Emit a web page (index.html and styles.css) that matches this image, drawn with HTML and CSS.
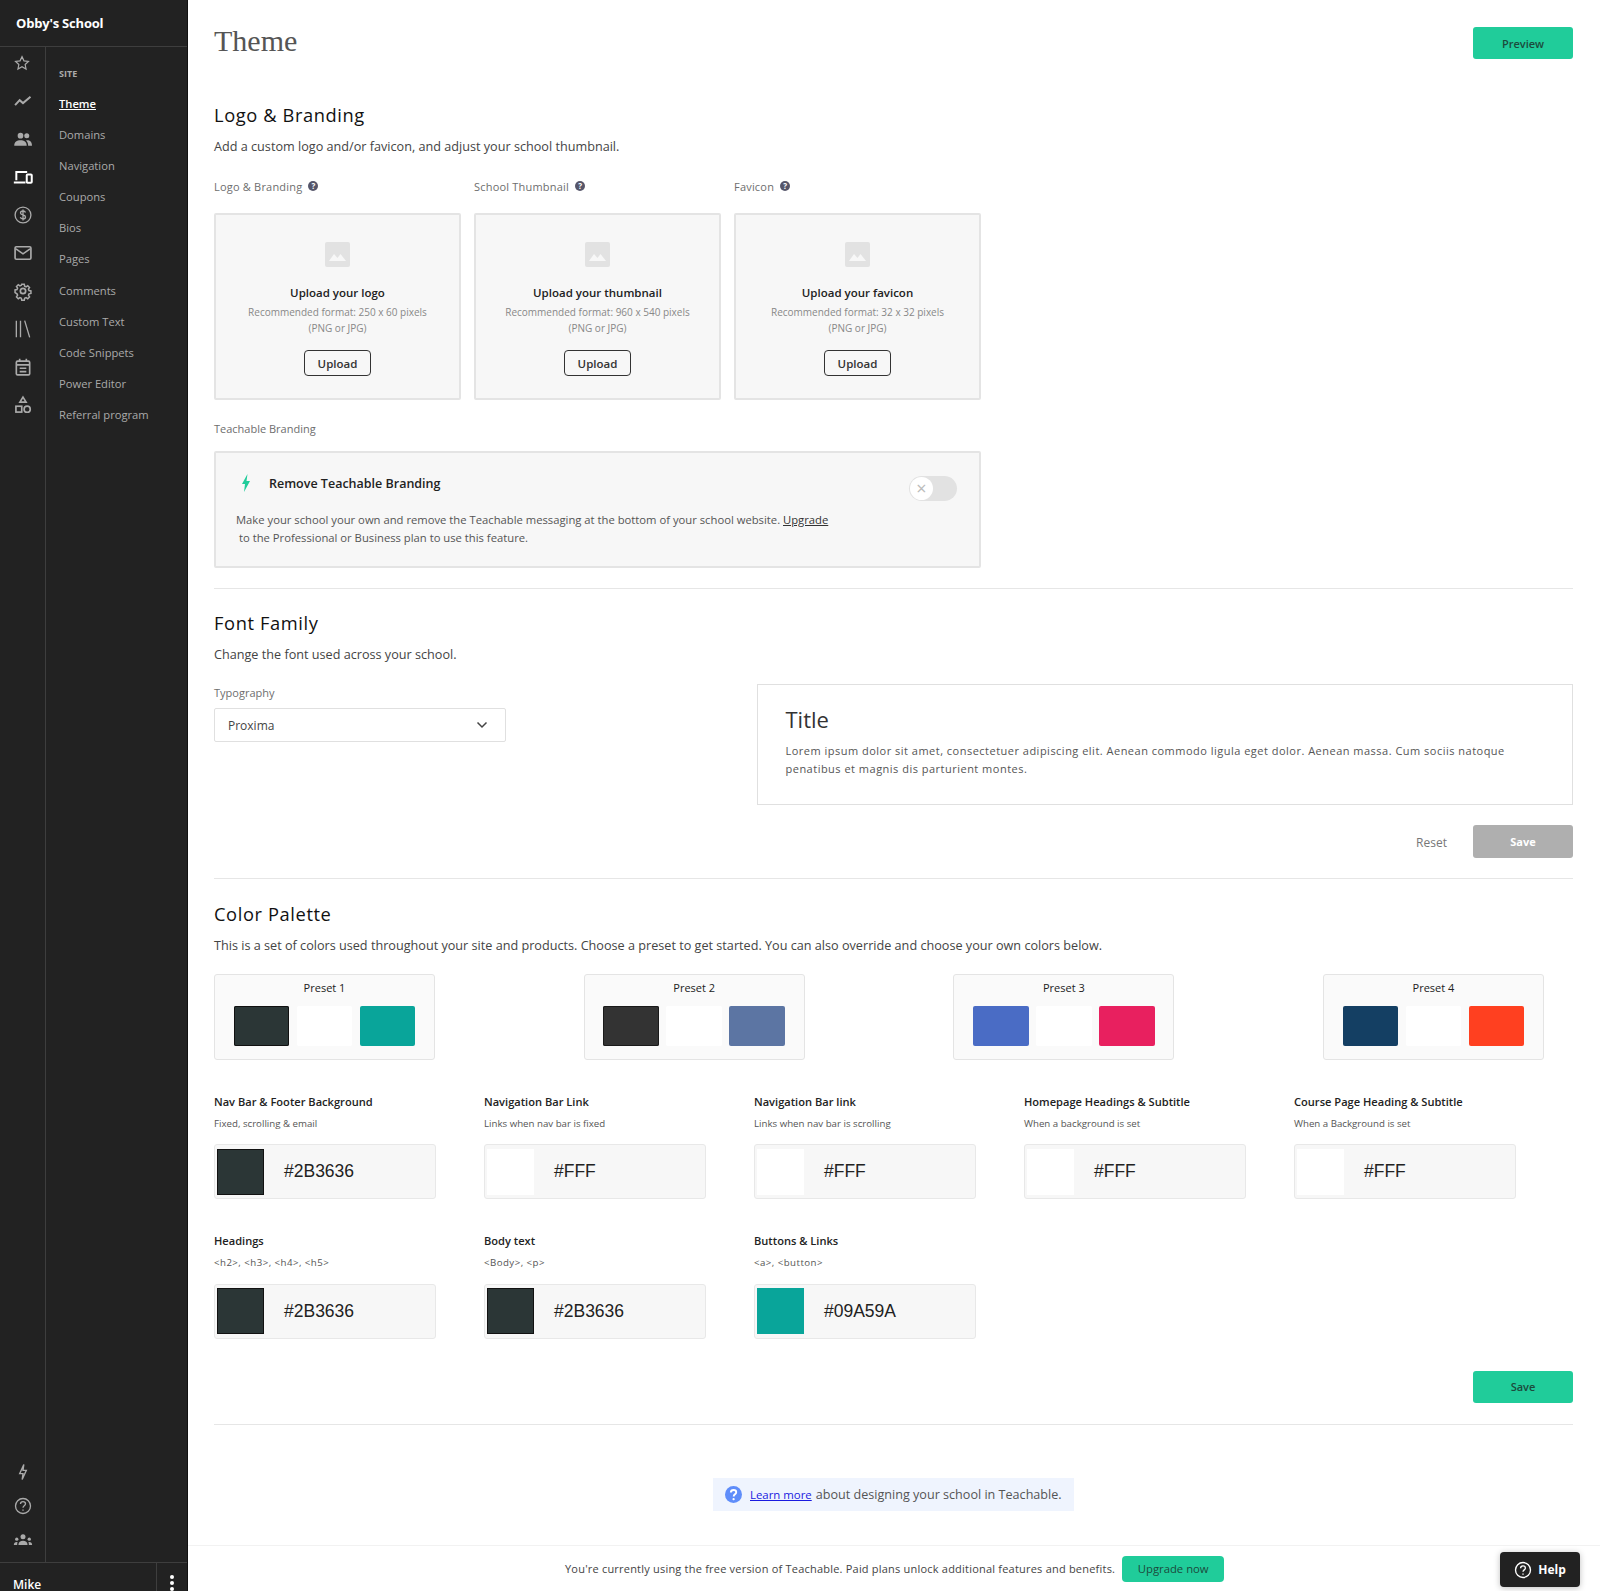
FILE: index.html
```html
<!DOCTYPE html>
<html lang="en">
<head>
<meta charset="utf-8">
<title>Theme</title>
<link rel="stylesheet" href="styles.css">
</head>
<body>
<div class="app">
  <aside class="sidebar">
    <div class="brand">Obby's School</div>
    <div class="side-body">
      <div class="rail">
        <div class="rail-top">
          <svg class="ri ri-star" viewBox="0 0 24 24"><path d="M12 3.500l2.600 5.600 6 .7-4.400 4.200 1.200 6L12 17l-5.400 3 1.200-6L3.400 9.800l6-.7z"/></svg>
          <svg class="ri" viewBox="0 0 24 24"><path d="M2.500 17l5.500-6 4 3.500 9-7.500" stroke-width="2.400"/></svg>
          <svg class="ri filled" viewBox="0 0 24 24"><circle cx="9" cy="8" r="3.400"/><circle cx="16.500" cy="8" r="3"/><path d="M1.500 20c0-4.500 3.200-6.500 7.500-6.500s7.500 2 7.500 6.500zM17 13.500c3.500 0 5.800 2 5.800 6.500h-4.600c0-2.500-.8-4.800-2.700-6.300z"/></svg>
          <svg class="ri active" viewBox="0 0 24 24"><path d="M4 16V6h13M1 18.500h14" stroke-width="2.400"/><rect x="16.500" y="9" width="6" height="10" rx="1" stroke-width="2.400"/></svg>
          <svg class="ri" viewBox="0 0 24 24"><circle cx="12" cy="12" r="9.500"/><path d="M15 9c-.5-1.300-1.600-1.800-3-1.800-1.800 0-3 .8-3 2.300 0 3.200 6 1.600 6 4.900 0 1.500-1.300 2.300-3 2.300-1.500 0-2.700-.6-3.200-2M12 5.500v13"/></svg>
          <svg class="ri" viewBox="0 0 24 24"><rect x="2.500" y="4.500" width="19" height="15" rx="1.500" stroke-width="2"/><path d="M3.500 7l8.500 6 8.500-6" stroke-width="2"/></svg>
          <svg class="ri" viewBox="0 0 24 24"><circle cx="12" cy="12" r="3.200" stroke-width="2"/><path d="M10.300 3h3.400l.5 2.600 1.900.8 2.200-1.500 2.400 2.400-1.500 2.200.8 1.900 2.600.5v3.400l-2.600.5-.8 1.900 1.500 2.200-2.400 2.400-2.200-1.500-1.900.8-.5 2.600h-3.400l-.5-2.600-1.900-.8-2.200 1.500-2.400-2.400 1.500-2.200-.8-1.900L1.400 14v-3.400l2.600-.5.8-1.900-1.500-2.200 2.400-2.400 2.200 1.500 1.900-.8z" transform="translate(12 12) scale(.9) translate(-12 -12)" stroke-width="2"/></svg>
          <svg class="ri" viewBox="0 0 24 24"><path d="M4 2v20M9 2v20M14 2l6 20"/></svg>
          <svg class="ri" viewBox="0 0 24 24"><rect x="4" y="5" width="16" height="16.500" rx="1.500" stroke-width="2"/><path d="M8 2v4M16 2v4M4 9.500h16M8 13.500h8M8 17.500h8" stroke-width="2"/></svg>
          <svg class="ri" viewBox="0 0 24 24"><path d="M12 2.500l3.700 6H8.300z" stroke-width="2"/><rect x="3.500" y="13.500" width="7" height="7" stroke-width="2"/><circle cx="17" cy="17" r="3.700" stroke-width="2"/></svg>
        </div>
        <div class="rail-bottom">
          <svg class="ri" viewBox="0 0 24 24"><path d="M13 3l-5 11h4l-1 7 5-11h-4z"/></svg>
          <svg class="ri" viewBox="0 0 24 24"><circle cx="12" cy="12" r="9"/><path d="M9 9.500c0-1.800 1.400-2.800 3-2.800s3 1 3 2.600c0 2.400-3 2.400-3 4.700M12 16.200v1.600"/></svg>
          <svg class="ri filled" viewBox="0 0 24 24"><circle cx="12" cy="8" r="3"/><circle cx="4.500" cy="11" r="2"/><circle cx="19.500" cy="11" r="2"/><path d="M6.500 18c0-3.500 2.500-5 5.500-5s5.500 1.500 5.500 5zM1 18c0-2 1.300-3.500 3.500-3.500l1 .3C5 15.800 5 17 5 18zM23 18c0-2-1.300-3.500-3.500-3.500l-1 .3c.5 1 .5 2.200.5 3.200z"/></svg>
        </div>
      </div>
      <nav class="side-nav">
        <div class="nav-head">SITE</div>
        <a class="nav-link current">Theme</a>
        <a class="nav-link">Domains</a>
        <a class="nav-link">Navigation</a>
        <a class="nav-link">Coupons</a>
        <a class="nav-link">Bios</a>
        <a class="nav-link">Pages</a>
        <a class="nav-link">Comments</a>
        <a class="nav-link">Custom Text</a>
        <a class="nav-link">Code Snippets</a>
        <a class="nav-link">Power Editor</a>
        <a class="nav-link">Referral program</a>
      </nav>
    </div>
    <div class="side-foot">
      <div class="user">Mike</div>
      <div class="dots"><i></i><i></i><i></i></div>
    </div>
  </aside>

  <div class="column">
    <main class="main">
      <header class="page-head">
        <h1 class="page-title">Theme</h1>
        <button class="btn btn-green">Preview</button>
      </header>

      <section class="sec sec-logo">
        <h2 class="sec-title">Logo &amp; Branding</h2>
        <p class="sec-desc">Add a custom logo and/or favicon, and adjust your school thumbnail.</p>
        <div class="uploads">
          <div class="upload-col">
            <div class="lbl lbl-up">Logo &amp; Branding <span class="qm">?</span></div>
            <div class="upload">
              <svg class="ph" viewBox="0 0 25 25"><rect width="25" height="25" rx="2" fill="#e2e2e2"/><path d="M4 19l5-7 3.500 4 3-4 5.500 7z" fill="#f7f7f7"/></svg>
              <div class="up-title">Upload your logo</div>
              <div class="up-sub">Recommended format: 250 x 60 pixels<br>(PNG or JPG)</div>
              <button class="btn-out">Upload</button>
            </div>
          </div>
          <div class="upload-col">
            <div class="lbl lbl-up">School Thumbnail <span class="qm">?</span></div>
            <div class="upload">
              <svg class="ph" viewBox="0 0 25 25"><rect width="25" height="25" rx="2" fill="#e2e2e2"/><path d="M4 19l5-7 3.500 4 3-4 5.500 7z" fill="#f7f7f7"/></svg>
              <div class="up-title">Upload your thumbnail</div>
              <div class="up-sub">Recommended format: 960 x 540 pixels<br>(PNG or JPG)</div>
              <button class="btn-out">Upload</button>
            </div>
          </div>
          <div class="upload-col">
            <div class="lbl lbl-up">Favicon <span class="qm">?</span></div>
            <div class="upload">
              <svg class="ph" viewBox="0 0 25 25"><rect width="25" height="25" rx="2" fill="#e2e2e2"/><path d="M4 19l5-7 3.500 4 3-4 5.500 7z" fill="#f7f7f7"/></svg>
              <div class="up-title">Upload your favicon</div>
              <div class="up-sub">Recommended format: 32 x 32 pixels<br>(PNG or JPG)</div>
              <button class="btn-out">Upload</button>
            </div>
          </div>
        </div>
        <div class="lbl lbl-brand">Teachable Branding</div>
        <div class="brand-box">
          <div class="brand-row">
            <svg class="bolt" viewBox="0 0 10 18"><path d="M6.500 0L1 10h3l-1 8 6-11H5.500z" fill="#20cc9a"/></svg>
            <span class="brand-title">Remove Teachable Branding</span>
            <span class="toggle"><span class="knob">×</span></span>
          </div>
          <p class="brand-text">Make your school your own and remove the Teachable messaging at the bottom of your school website. <a class="dark-link">Upgrade</a><br><span class="indent">to the Professional or Business plan to use this feature.</span></p>
        </div>
      </section>

      <section class="sec sec-font">
        <h2 class="sec-title">Font Family</h2>
        <p class="sec-desc">Change the font used across your school.</p>
        <div class="font-row">
          <div class="font-pick">
            <div class="lbl">Typography</div>
            <div class="select">Proxima
              <svg class="chev" viewBox="0 0 12 8"><path d="M1.500 1.500L6 6l4.500-4.500"/></svg>
            </div>
          </div>
          <div class="font-preview">
            <div class="fp-title">Title</div>
            <p class="fp-text">Lorem ipsum dolor sit amet, consectetuer adipiscing elit. Aenean commodo ligula eget dolor. Aenean massa. Cum sociis natoque penatibus et magnis dis parturient montes.</p>
          </div>
        </div>
        <div class="actions">
          <span class="reset">Reset</span>
          <button class="btn btn-grey">Save</button>
        </div>
      </section>

      <section class="sec sec-color">
        <h2 class="sec-title">Color Palette</h2>
        <p class="sec-desc">This is a set of colors used throughout your site and products. Choose a preset to get started. You can also override and choose your own colors below.</p>
        <div class="presets">
          <div class="preset"><div class="preset-name">Preset 1</div><div class="chips"><i class="chip c-dark"></i><i class="chip c-white"></i><i class="chip c-teal"></i></div></div>
          <div class="preset"><div class="preset-name">Preset 2</div><div class="chips"><i class="chip c-char"></i><i class="chip c-white"></i><i class="chip c-slate"></i></div></div>
          <div class="preset"><div class="preset-name">Preset 3</div><div class="chips"><i class="chip c-blue"></i><i class="chip c-white"></i><i class="chip c-pink"></i></div></div>
          <div class="preset"><div class="preset-name">Preset 4</div><div class="chips"><i class="chip c-navy"></i><i class="chip c-white"></i><i class="chip c-orange"></i></div></div>
        </div>
        <div class="fields">
          <div class="field"><div class="f-name">Nav Bar &amp; Footer Background</div><div class="f-sub">Fixed, scrolling &amp; email</div><div class="f-box"><i class="f-sw c-dark"></i><span class="f-val">#2B3636</span></div></div>
          <div class="field"><div class="f-name">Navigation Bar Link</div><div class="f-sub">Links when nav bar is fixed</div><div class="f-box"><i class="f-sw c-white"></i><span class="f-val">#FFF</span></div></div>
          <div class="field"><div class="f-name">Navigation Bar link</div><div class="f-sub">Links when nav bar is scrolling</div><div class="f-box"><i class="f-sw c-white"></i><span class="f-val">#FFF</span></div></div>
          <div class="field"><div class="f-name">Homepage Headings &amp; Subtitle</div><div class="f-sub">When a background is set</div><div class="f-box"><i class="f-sw c-white"></i><span class="f-val">#FFF</span></div></div>
          <div class="field"><div class="f-name">Course Page Heading &amp; Subtitle</div><div class="f-sub">When a Background is set</div><div class="f-box"><i class="f-sw c-white"></i><span class="f-val">#FFF</span></div></div>
          <div class="field"><div class="f-name">Headings</div><div class="f-sub f-code">&lt;h2&gt;, &lt;h3&gt;, &lt;h4&gt;, &lt;h5&gt;</div><div class="f-box"><i class="f-sw c-dark"></i><span class="f-val">#2B3636</span></div></div>
          <div class="field"><div class="f-name">Body text</div><div class="f-sub f-code">&lt;Body&gt;, &lt;p&gt;</div><div class="f-box"><i class="f-sw c-dark"></i><span class="f-val">#2B3636</span></div></div>
          <div class="field"><div class="f-name">Buttons &amp; Links</div><div class="f-sub f-code">&lt;a&gt;, &lt;button&gt;</div><div class="f-box"><i class="f-sw c-teal"></i><span class="f-val">#09A59A</span></div></div>
        </div>
        <div class="actions actions-color">
          <button class="btn btn-green">Save</button>
        </div>
      </section>

      <div class="learn-wrap">
        <div class="learn">
          <svg class="learn-q" viewBox="0 0 18 18"><circle cx="9" cy="9" r="9" fill="#5f8dfa"/><path d="M6.200 7c0-1.700 1.300-2.700 2.900-2.700s2.800 1 2.800 2.400c0 2.100-2.700 2.100-2.700 4.300" fill="none" stroke="#fff" stroke-width="2"/><circle cx="9.100" cy="14" r="1.200" fill="#fff"/></svg>
          <a class="learn-link">Learn more</a> <span>about designing your school in Teachable.</span>
        </div>
      </div>
    </main>

    <footer class="promo">
      <span class="promo-text">You're currently using the free version of Teachable. Paid plans unlock additional features and benefits.</span>
      <button class="btn-up">Upgrade now</button>
      <button class="help">
        <svg class="help-i" viewBox="0 0 24 24"><circle cx="12" cy="12" r="10"/><path d="M8.800 9.500c0-2 1.500-3 3.200-3s3.200 1 3.200 2.800c0 2.500-3.200 2.500-3.200 5M12 16.500v1.800"/></svg>
        Help
      </button>
    </footer>
  </div>
</div>
</body>
</html>
```
FILE: styles.css
```css
* { box-sizing: border-box; }
html, body { margin: 0; padding: 0; height: 100%; }
body {
  font-family: "Open Sans", "Noto Sans", sans-serif;
  color: #222;
  background: #fff;
  overflow: hidden;
}
.app { display: flex; height: 1591px; }
button { font-family: inherit; cursor: pointer; }

/* Sidebar */
.sidebar {
  width: 188px;
  flex: none;
  background: #222;
  border-right: 1px solid #111;
  display: flex;
  flex-direction: column;
}
.brand {
  height: 47px;
  padding: 14px 0 0 16px;
  font-size: 13px;
  font-weight: 700;
  color: #fff;
  letter-spacing: -.2px;
  line-height: 18px;
  border-bottom: 1px solid #3e3e3e;
}
.side-body { flex: 1; display: flex; min-height: 0; }
.rail {
  width: 46px;
  border-right: 1px solid #3e3e3e;
  display: flex;
  flex-direction: column;
  justify-content: space-between;
  align-items: center;
  padding: 6px 0 12px;
}
.rail-top { display: flex; flex-direction: column; gap: 18px; }
.rail-bottom { display: flex; flex-direction: column; gap: 14px; }
.ri {
  display: block;
  width: 20px;
  height: 20px;
  fill: none;
  stroke: #aaa;
  stroke-width: 1.600;
}
.ri-star { transform: translateX(-1px) scale(.9); }
.ri.active { stroke: #fff; }
.ri.filled { fill: #aaa; stroke: none; }
.side-nav { padding: 19px 0 0 13px; }
.nav-head {
  font-size: 9px;
  font-weight: 700;
  color: #aaa;
  line-height: 16px;
  margin-bottom: 14px;
}
.nav-link {
  display: block;
  font-size: 11.200px;
  line-height: 16px;
  color: #aaa;
  margin-bottom: 15.100px;
}
.nav-link.current { color: #fff; font-weight: 600; text-decoration: underline; }
.side-foot {
  height: 29px;
  flex: none;
  border-top: 1px solid #3e3e3e;
  display: flex;
  overflow: hidden;
}
.user {
  width: 157px;
  padding: 15px 0 0 13px;
  font-size: 12px;
  font-weight: 600;
  line-height: 13px;
  color: #fff;
  border-right: 1px solid #3e3e3e;
}
.dots { flex: 1; display: flex; flex-direction: column; align-items: center; gap: 2px; padding-top: 12px; }
.dots i { width: 4px; height: 4px; border-radius: 50%; background: #fff; flex: none; }

/* Main column */
.column { flex: 1; min-width: 0; display: flex; flex-direction: column; }
.main { flex: 1; min-height: 0; padding: 0 27px 0 26px; overflow: hidden; }
.page-head { display: flex; justify-content: space-between; align-items: flex-start; padding-top: 27px; height: 98px; }
.page-title {
  margin: -3px 0 0;
  font-family: "Liberation Serif", serif;
  font-weight: 400;
  font-size: 30px;
  line-height: 34px;
  color: #555;
}
.btn {
  width: 100px;
  height: 32px;
  border: 0;
  border-radius: 3px;
  font-size: 11px;
  font-weight: 600;
}
.btn-green { background: #20cc9a; color: #1c4a3c; }
.btn-grey { background: #afafaf; color: #fff; font-weight: 700; height: 33px; }

.sec-title {
  margin: -1px 0 0;
  font-size: 18.300px;
  font-weight: 500;
  line-height: 24px;
  color: #111;
  letter-spacing: .6px;
}
.sec-desc {
  margin: 9px 0 0;
  font-size: 12.650px;
  line-height: 20px;
  color: #444;
}
.sec { border-bottom: 1px solid #e6e6e6; }
.sec-logo { padding: 6px 0 20px; }
.uploads { display: flex; gap: 13px; margin-top: 23px; }
.upload-col { width: 247px; }
.lbl { font-size: 11px; line-height: 16px; color: #6e6e6e; }
.lbl-up { letter-spacing: .2px; }
.qm {
  display: inline-block;
  width: 10px;
  height: 10px;
  margin-left: 3px;
  border-radius: 50%;
  background: #56566a;
  color: #fff;
  font-size: 8px;
  font-weight: 700;
  line-height: 10px;
  text-align: center;
  vertical-align: 2px;
  letter-spacing: 0;
}
.upload {
  margin-top: 18px;
  height: 187px;
  background: #f7f7f7;
  border: 2px solid #e4e4e4;
  border-radius: 2px;
  display: flex;
  flex-direction: column;
  align-items: center;
  padding-top: 27px;
}
.ph { width: 25px; height: 25px; display: block; }
.up-title { margin-top: 18px; font-size: 11.500px; font-weight: 600; line-height: 16px; color: #222; }
.up-sub { margin-top: 3px; font-size: 10px; line-height: 16px; color: #888; text-align: center; }
.btn-out {
  margin-top: 14px;
  width: 67px;
  height: 26px;
  background: transparent;
  border: 1px solid #333;
  border-radius: 4px;
  font-size: 11.500px;
  font-weight: 600;
  color: #333;
  padding: 0;
}
.lbl-brand { margin-top: 21px; }
.brand-box {
  margin-top: 14px;
  width: 767px;
  height: 117px;
  background: #f7f7f7;
  border: 2px solid #e4e4e4;
  border-radius: 2px;
  padding: 21px 22px 0 20px;
}
.brand-row { display: flex; align-items: flex-start; height: 31px; }
.bolt { width: 10px; height: 18px; margin: 0 0 0 5px; flex: none; }
.brand-title { margin-left: 18px; font-size: 12.500px; font-weight: 600; line-height: 20px; color: #222; }
.toggle {
  margin-left: auto;
  width: 48px;
  height: 25px;
  border-radius: 13px;
  background: #e2e2e2;
  display: flex;
  padding: 1px;
  margin-top: 2px;
}
.knob {
  width: 23px;
  height: 23px;
  border-radius: 50%;
  background: #fff;
  color: #bbb;
  font-size: 18px;
  line-height: 22px;
  text-align: center;
}
.brand-text { margin: 6px 0 0; font-size: 11.250px; line-height: 18px; color: #555; }
.dark-link { color: #333; text-decoration: underline; }
.indent { margin-left: 3px; }

.sec-font { padding: 23px 0 20px; }
.font-row { display: flex; justify-content: space-between; margin-top: 20px; }
.font-pick { width: 292px; padding-top: 1px; }
.font-pick .lbl { line-height: 16px; }
.select {
  margin-top: 7px;
  height: 34px;
  border: 1px solid #e0e0e0;
  border-radius: 2px;
  padding: 0 17px 0 13px;
  display: flex;
  align-items: center;
  justify-content: space-between;
  font-size: 12px;
  color: #444;
}
.chev { width: 12px; height: 8px; fill: none; stroke: #444; stroke-width: 1.500; }
.font-preview {
  width: 816px;
  height: 121px;
  border: 1px solid #e0e0e0;
  padding: 19px 27.500px 0;
}
.fp-title { font-size: 22px; line-height: 30px; color: #333; font-weight: 400; }
.fp-text { margin: 8px 0 0; font-size: 11px; line-height: 18px; color: #555; letter-spacing: .49px; }
.actions { display: flex; justify-content: flex-end; align-items: center; gap: 26px; margin-top: 20px; }
.reset { font-size: 12px; color: #777; padding-top: 2px; }

.sec-color { padding: 23.500px 0 21px; }
.presets { display: flex; justify-content: space-between; width: 1330px; margin-top: 19px; }
.preset {
  width: 221px;
  height: 86px;
  background: #fafafa;
  border: 1px solid #e4e4e4;
  border-radius: 3px;
  padding-top: 5px;
}
.preset-name { text-align: center; font-size: 11px; font-weight: 500; line-height: 16px; color: #222; }
.chips { display: flex; justify-content: center; gap: 7.500px; margin-top: 10px; }
.chip { width: 55.500px; height: 40px; border-radius: 2px; display: block; }
.c-dark { background: #2b3636; box-shadow: inset 0 0 0 1px #111; }
.c-white { background: #fff; }
.c-teal { background: #09a59a; }
.c-char { background: #333; box-shadow: inset 0 0 0 1px #1a1a1a; }
.c-slate { background: #5c75a3; }
.c-blue { background: #4a6cc5; }
.c-pink { background: #e8205f; }
.c-navy { background: #143f63; }
.c-orange { background: #ff4020; }

.fields {
  display: grid;
  grid-template-columns: repeat(5, 222px);
  column-gap: 48px;
  row-gap: 34px;
  margin-top: 34.500px;
}
.f-name { font-size: 11.100px; font-weight: 600; line-height: 16px; color: #222; }
.f-sub { margin-top: 5.500px; font-size: 9.700px; line-height: 16px; color: #555; }
.f-code { margin-top: 6px; letter-spacing: .45px; }
.f-box {
  margin-top: 12.500px;
  height: 55px;
  background: #f7f7f7;
  border: 1px solid #e8e8e8;
  border-radius: 3px;
  padding: 4px 3px 4px 2px;
  display: flex;
  align-items: center;
}
.f-sw { width: 47px; height: 46px; display: block; flex: none; }
.f-val { margin-left: 20px; font-family: "Liberation Sans", sans-serif; font-size: 17.500px; color: #222; }
.actions-color { margin-top: 32px; }

.learn-wrap { display: flex; padding: 53px 0 0 499px; }
.learn {
  width: 361px;
  height: 33px;
  background: #eff4fe;
  display: flex;
  align-items: center;
  padding-left: 12px;
  font-size: 12.600px;
  color: #555;
  gap: 4px;
  white-space: pre;
}
.learn-q { width: 17px; height: 17px; margin-right: 4px; flex: none; }
.learn-link { color: #1a1ae0; font-size: 11.400px; text-decoration: underline; }

.promo {
  height: 46px;
  flex: none;
  border-top: 1px solid #f2f2f2;
  display: flex;
  align-items: center;
  padding-left: 377px;
  position: relative;
}
.promo-text { font-size: 11px; letter-spacing: .21px; color: #444; white-space: nowrap; }
.btn-up {
  margin-left: 7px;
  width: 102px;
  height: 26px;
  background: #20cc9a;
  border: 0;
  border-radius: 4px;
  font-size: 11.300px;
  font-weight: 500;
  color: #1c4a3c;
  padding: 0;
}
.help {
  position: absolute;
  right: 20px;
  top: 6px;
  width: 80px;
  height: 35px;
  background: #222;
  border: 0;
  border-radius: 4px;
  color: #fff;
  font-size: 12px;
  font-weight: 700;
  display: flex;
  align-items: center;
  justify-content: center;
  gap: 6px;
  box-shadow: 0 1px 6px rgba(0,0,0,.25);
}
.help-i { width: 18px; height: 18px; fill: none; stroke: #fff; stroke-width: 1.800; }
```
